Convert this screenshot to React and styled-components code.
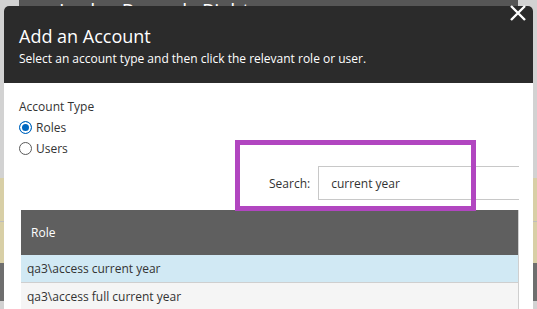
import React, { useState } from "react";
import styled, { createGlobalStyle } from "styled-components";

const GlobalStyle = createGlobalStyle`
  html, body {
    margin: 0;
    padding: 0;
    width: 537px;
    height: 309px;
    overflow: hidden;
    font-family: "Open Sans", "Liberation Sans", sans-serif;
  }
`;

const Page = styled.div`
  position: relative;
  width: 537px;
  height: 309px;
  background-color: #d2d2d2;
  overflow: hidden;
`;

const TopBar = styled.div`
  margin-left: 19px;
  width: 499px;
  height: 9px;
  overflow: hidden;
  background-color: #565656;
  color: #fff;
  font-size: 20px;
  line-height: 20px;
  padding: 1px 0 0 40px;
  box-sizing: border-box;
  white-space: nowrap;
`;

const Band = styled.div`
  margin-top: ${(props) => props.$gap || 0}px;
  height: ${(props) => props.$h}px;
  background-color: ${(props) => props.$color};
  border-top: ${(props) => (props.$line ? "1px solid #bdbdbd" : "none")};
`;

const Modal = styled.div`
  position: absolute;
  left: 4px;
  top: 6px;
  width: 529px;
  height: 320px;
  background-color: #fff;
  border-radius: 5px 5px 0 0;
`;

const Header = styled.div`
  height: 77px;
  box-sizing: border-box;
  padding: 17px 15px 0;
  background-color: #2b2b2b;
  border-radius: 5px 5px 0 0;
  color: #fff;
`;

const Title = styled.h1`
  margin: 0;
  font-size: 18px;
  line-height: 26px;
  font-weight: 400;
`;

const Subtitle = styled.p`
  margin: 1px 0 0;
  font-size: 12px;
  line-height: 18px;
`;

const CloseButton = styled.button`
  position: absolute;
  top: -2px;
  right: 6px;
  width: 18px;
  height: 18px;
  padding: 0;
  border: 0;
  background: none;
  cursor: pointer;
`;

const Body = styled.div`
  padding: 15px 0 0 15px;
  width: 515px;
  box-sizing: border-box;
  overflow: hidden;
  color: #333;
`;

const Label = styled.div`
  font-size: 12px;
  line-height: 18px;
  margin-bottom: 1px;
`;

const RadioRow = styled.label`
  display: flex;
  align-items: center;
  gap: 4px;
  height: 21px;
  font-size: 12px;
  cursor: pointer;
`;

const RadioCircle = styled.span`
  width: 13px;
  height: 13px;
  box-sizing: border-box;
  border-radius: 50%;
  border: 1px solid ${(props) => (props.$checked ? "#0067c0" : "#5a5a5a")};
  background-color: ${(props) => (props.$checked ? "#0067c0" : "#fff")};
  box-shadow: ${(props) => (props.$checked ? "inset 0 0 0 2px #fff" : "none")};
`;

const SearchRow = styled.div`
  display: flex;
  align-items: center;
  gap: 8px;
  margin-top: 7px;
  padding-left: 250px;
  font-size: 12px;
`;

const SearchInput = styled.input`
  flex-shrink: 0;
  width: 230px;
  height: 34px;
  box-sizing: border-box;
  border: 1px solid #c8c8c8;
  padding: 0 12px;
  font-family: inherit;
  font-size: 12px;
  color: #333;
  outline: none;
`;

const Table = styled.div`
  margin: 10px 0 0 2px;
  width: 498px;
  border-right: 1px solid #cfcfcf;
  box-sizing: border-box;
`;

const HeadCell = styled.div`
  height: 45px;
  display: flex;
  align-items: center;
  padding-left: 10px;
  background-color: #5f5f5f;
  color: #fff;
  font-size: 12px;
`;

const Row = styled.div`
  height: 27px;
  display: flex;
  align-items: center;
  padding-left: 6px;
  font-size: 12px;
  background-color: ${(props) => (props.$selected ? "#d1e9f4" : "#f5f5f5")};
  border-bottom: 1px solid #cfcfcf;
`;

const Highlight = styled.div`
  position: absolute;
  left: 231px;
  top: 134px;
  width: 241px;
  height: 71px;
  box-sizing: border-box;
  border: 5px solid #b146c0;
  pointer-events: none;
`;

const roles = ["qa3\\access current year", "qa3\\access full current year"];

const App = () => {
  const [type, setType] = useState("roles");
  const [search, setSearch] = useState("current year");

  return (
    <Page>
      <GlobalStyle />
      <TopBar>Lesley Records Right</TopBar>
      <Band $gap={169} $h={43} $color="#d8cfa6" />
      <Band $h={41} $color="#d8cfa6" $line />
      <Band $h={38} $color="#6e6e6e" />
      <Modal>
        <Header>
          <Title>Add an Account</Title>
          <Subtitle>
            Select an account type and then click the relevant role or user.
          </Subtitle>
        </Header>
        <CloseButton aria-label="Close">
          <svg width="18" height="18" viewBox="0 0 18 18">
            <path
              d="M2 2 L16 16 M16 2 L2 16"
              stroke="#fff"
              strokeWidth="2.4"
              fill="none"
            />
          </svg>
        </CloseButton>
        <Body>
          <Label>Account Type</Label>
          <RadioRow onClick={() => setType("roles")}>
            <RadioCircle $checked={type === "roles"} />
            Roles
          </RadioRow>
          <RadioRow onClick={() => setType("users")}>
            <RadioCircle $checked={type === "users"} />
            Users
          </RadioRow>
          <SearchRow>
            Search:
            <SearchInput
              value={search}
              onChange={(e) => setSearch(e.target.value)}
            />
          </SearchRow>
          <Table>
            <HeadCell>Role</HeadCell>
            {roles.map((r, i) => (
              <Row key={r} $selected={i === 0}>
                {r}
              </Row>
            ))}
          </Table>
        </Body>
        <Highlight />
      </Modal>
    </Page>
  );
};

export default App;
